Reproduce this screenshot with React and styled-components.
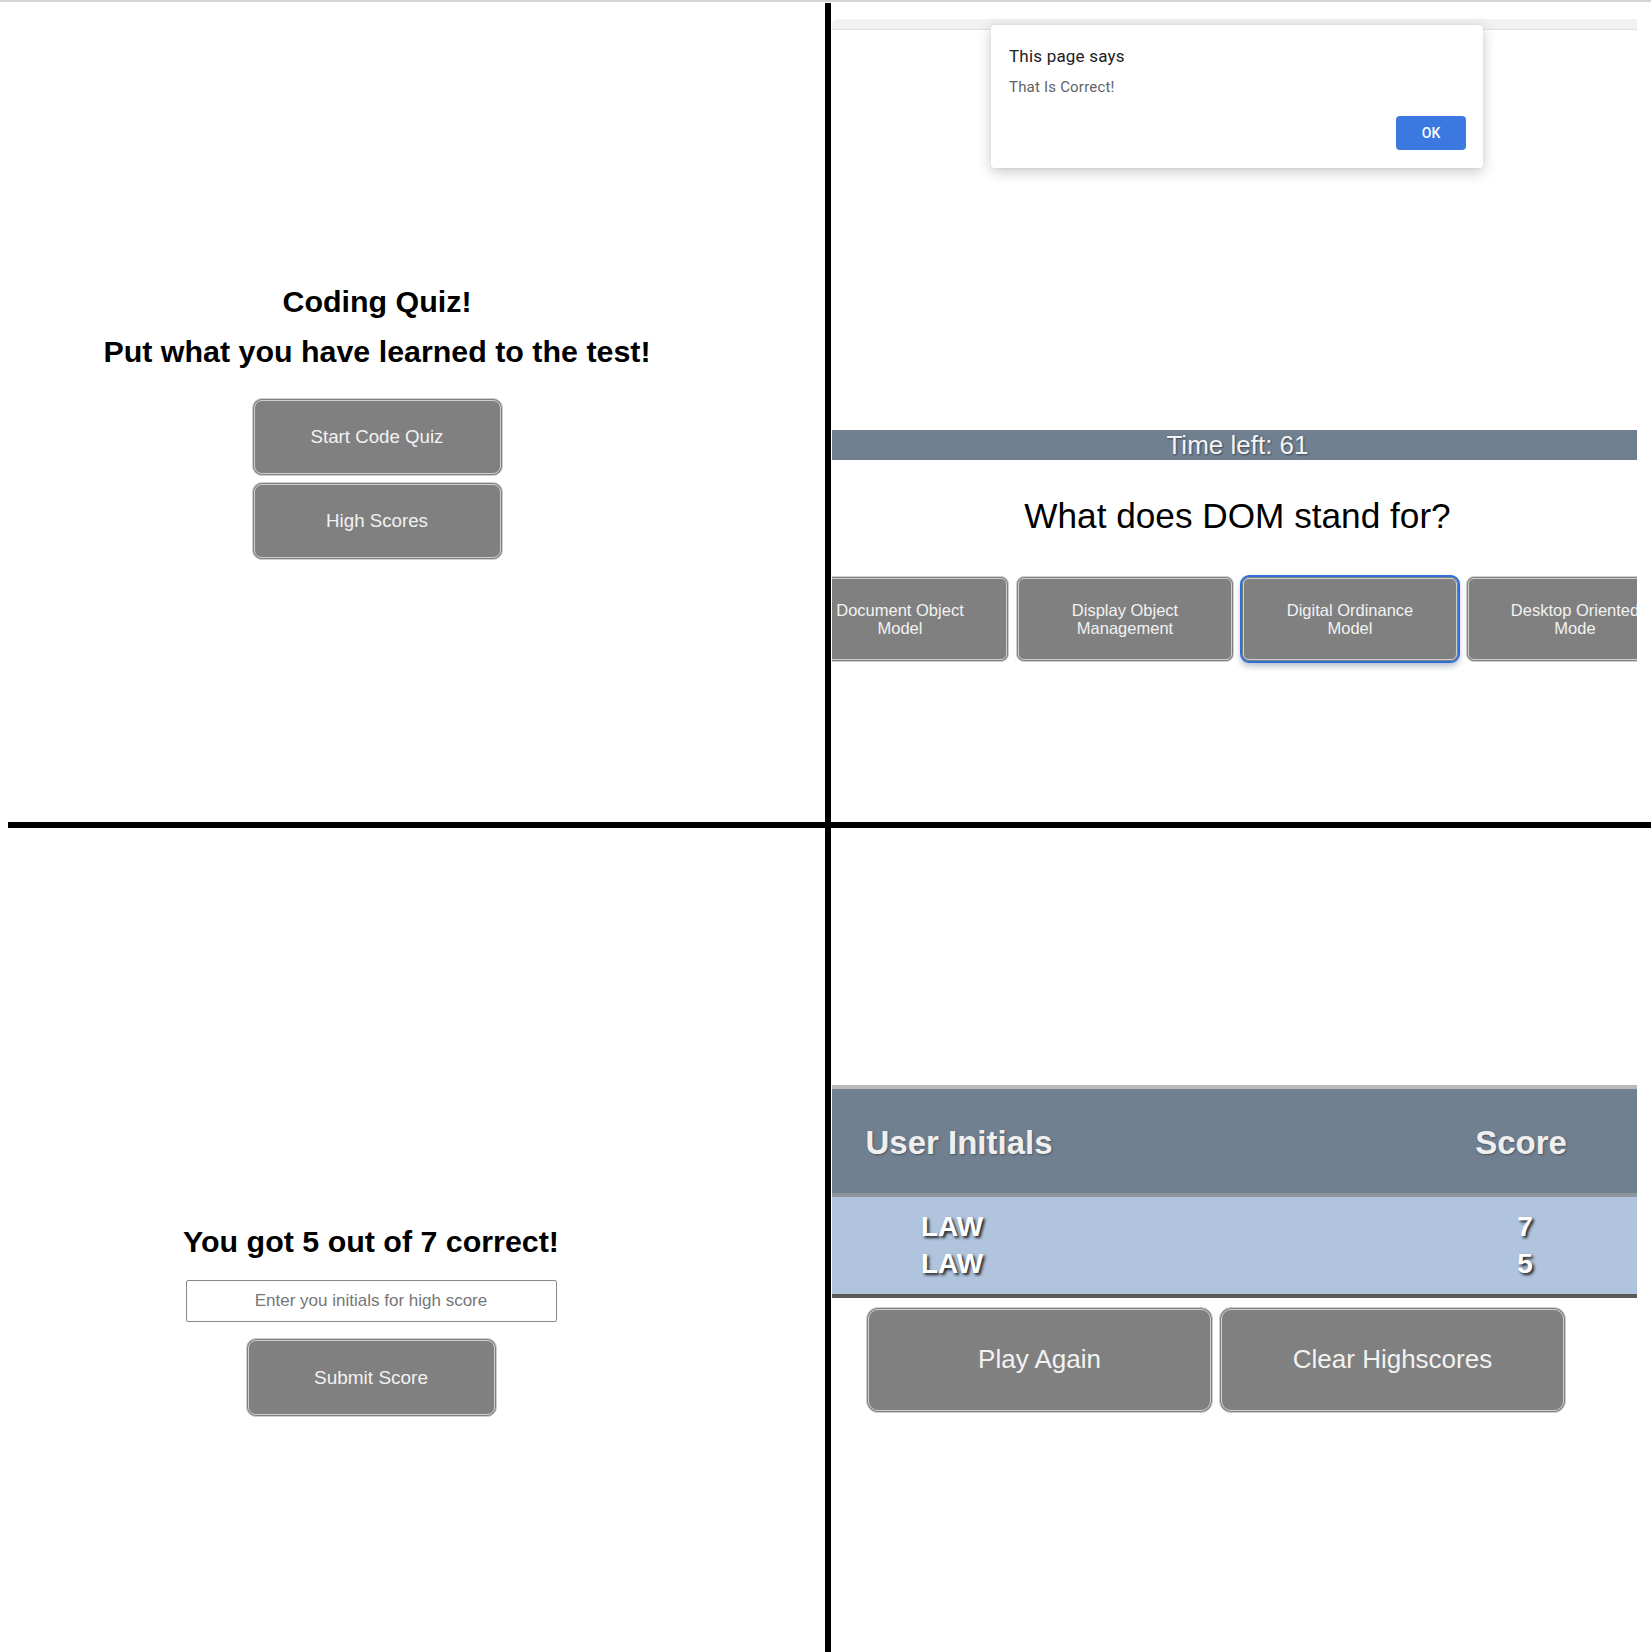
import React from 'react'
import styled, { createGlobalStyle } from 'styled-components'

const GlobalStyle = createGlobalStyle`
  html, body {
    margin: 0;
    padding: 0;
    background: #fff;
  }
  body {
    font-family: "Liberation Sans", Arial, sans-serif;
  }
  * {
    box-sizing: border-box;
  }
`

const Collage = styled.div`
  width: 1651px;
  height: 1652px;
  border-top: 2px solid #d4d4d4;
  padding-top: 1px;
  display: grid;
  grid-template-columns: 825px 6px 820px;
  grid-template-rows: 819px 6px 824px;
  overflow: hidden;
`

const VDivider = styled.div`
  grid-column: 2;
  grid-row: 1 / 4;
  background: #000;
`

const HDivider = styled.div`
  grid-column: 1 / 4;
  grid-row: 2;
  margin-left: 8px;
  background: #000;
`

const Panel = styled.section`
  grid-column: ${p => p.$col};
  grid-row: ${p => p.$row};
  position: relative;
  background: #fff;
  overflow: hidden;
`

/* left hand screens: centred column */
const CenterColumn = styled.div`
  width: ${p => p.$width}px;
  padding-top: ${p => p.$top}px;
  display: flex;
  flex-direction: column;
  align-items: center;
`

const Heading = styled.h1`
  margin: 0 0 ${p => p.$gap || 0}px;
  font-size: 30.4px;
  line-height: 34px;
  font-weight: 700;
  color: #000;
  text-align: center;
  white-space: nowrap;
`

const GrayButton = styled.button`
  flex-shrink: 0;
  width: ${p => p.$w}px;
  height: ${p => p.$h}px;
  margin-top: ${p => p.$mt || 0}px;
  padding: 0 4px;
  background: #808080;
  border: 3px double #cfcfcf;
  border-radius: ${p => p.$radius || 10}px;
  color: #f2f2f2;
  font-family: "Liberation Sans", Arial, sans-serif;
  font-size: ${p => p.$font}px;
  line-height: 1.12;
  text-align: center;
  cursor: pointer;
  white-space: nowrap;

  ${p => p.$focused && `
    outline: 2px solid #2f6fd8;
    outline-offset: -1px;
    box-shadow: 0 4px 6px rgba(40, 60, 100, 0.35);
  `}
`

const InitialsInput = styled.input`
  width: 371px;
  height: 42px;
  margin-top: 22px;
  border: 1px solid #8a8a8a;
  border-radius: 2px;
  font-family: "Liberation Sans", Arial, sans-serif;
  font-size: 17px;
  text-align: center;
  color: #222;
  background: #fff;

  &::placeholder {
    color: #767676;
  }
`

/* right hand screens: the cropped browser viewport */
const Viewport = styled.div`
  margin-left: 1px;
  width: 805px;
  height: 100%;
  overflow: hidden;
`

const Screen = styled.div`
  width: ${p => p.$width}px;
  height: 100%;
  display: flex;
  flex-direction: column;
`

const ChromeBand = styled.div`
  margin-top: 16px;
  width: 805px;
  height: 11px;
  background: #f1f1f1;
  border-bottom: 1px solid #e2e2e2;
  border-radius: 6px 0 0 0;
`

const TimerBar = styled.div`
  margin-top: ${p => p.$mt}px;
  height: 30px;
  background: #708090;
  color: #f4f4f4;
  font-size: 26px;
  line-height: 30px;
  text-align: center;
  text-shadow: 1px 1px 2px #3c4550;
`

const Question = styled.h2`
  margin: 36px 0 0;
  font-size: 35.2px;
  line-height: 40px;
  font-weight: 400;
  color: #000;
  text-align: center;
`

const AnswerRow = styled.div`
  margin-top: 40px;
  display: flex;
  justify-content: center;
  gap: 7px;
`

/* alert dialog over the quiz screen */
const Dialog = styled.div`
  position: absolute;
  left: 160px;
  top: 22px;
  width: 492px;
  height: 143px;
  background: #fff;
  border-radius: 3px;
  box-shadow: 0 4px 14px rgba(0, 0, 0, 0.22), 0 0 1px rgba(0, 0, 0, 0.2);
  padding: 20px 17px 0 18px;
  font-family: Roboto, "Liberation Sans", sans-serif;
  display: flex;
  flex-direction: column;
`

const DialogTitle = styled.div`
  font-size: 17px;
  line-height: 22px;
  letter-spacing: 0.2px;
  color: #202124;
`

const DialogMessage = styled.div`
  margin-top: 10px;
  font-size: 15px;
  line-height: 20px;
  letter-spacing: 0.2px;
  color: #5f6368;
`

const DialogActions = styled.div`
  margin-top: auto;
  margin-bottom: 18px;
  display: flex;
  justify-content: flex-end;
`

const OkButton = styled.button`
  width: 70px;
  height: 34px;
  border: none;
  border-radius: 4px;
  background: #3b78e0;
  color: #fff;
  font-family: Roboto, "Liberation Sans", sans-serif;
  font-size: 14px;
  font-weight: 500;
`

/* high score table */
const ScoreTable = styled.div`
  margin-top: 257px;
  border-top: 4px solid #b9b9b9;
  border-bottom: 4px solid #5a5a5a;
`

const ScoreHead = styled.div`
  height: 108px;
  background: #708090;
  border-bottom: 4px solid #8e959c;
  display: flex;
  align-items: center;
  justify-content: space-between;
  padding: 4px 16px 0 27px;
  color: #efefef;
  font-size: 33px;
  font-weight: 700;
  text-shadow: 1px 1px 2px #4a5560;
`

const ScoreBody = styled.div`
  height: 97px;
  background: #b0c4de;
  padding: 11px 12px 0 20px;
`

const ScoreRow = styled.div`
  height: 37px;
  display: flex;
  align-items: center;
  justify-content: space-between;
  color: #fff;
  font-size: 28px;
  font-weight: 700;
  text-shadow: 2px 2px 3px #1e1e1e;
`

const Cell = styled.span`
  width: 200px;
  text-align: center;
`

const ScoreActions = styled.div`
  margin: 9px 0 0 34px;
  display: flex;
  gap: 6px;
`

const answers = [
  ['Document Object', 'Model'],
  ['Display Object', 'Management'],
  ['Digital Ordinance', 'Model'],
  ['Desktop Oriented', 'Mode']
]

const scores = [
  { initials: 'LAW', score: 7 },
  { initials: 'LAW', score: 5 }
]

export default function App() {
  return (
    <>
      <GlobalStyle />
      <Collage>
        {/* start screen */}
        <Panel $col={1} $row={1}>
          <CenterColumn $width={754} $top={281}>
            <Heading $gap={16}>Coding Quiz!</Heading>
            <Heading>Put what you have learned to the test!</Heading>
            <GrayButton $w={251} $h={78} $mt={30} $font={18.7}>Start Code Quiz</GrayButton>
            <GrayButton $w={251} $h={78} $mt={6} $font={18.7}>High Scores</GrayButton>
          </CenterColumn>
        </Panel>

        <VDivider />

        {/* question screen with alert */}
        <Panel $col={3} $row={1}>
          <Viewport>
            <Screen $width={811}>
              <ChromeBand />
              <TimerBar $mt={400}>Time left: 61</TimerBar>
              <Question>What does DOM stand for?</Question>
              <AnswerRow>
                {answers.map((lines, i) => (
                  <GrayButton key={i} $w={218} $h={86} $font={16.5} $radius={8} $focused={i === 2}>
                    {lines[0]}
                    <br />
                    {lines[1]}
                  </GrayButton>
                ))}
              </AnswerRow>
            </Screen>
          </Viewport>
          <Dialog>
            <DialogTitle>This page says</DialogTitle>
            <DialogMessage>That Is Correct!</DialogMessage>
            <DialogActions>
              <OkButton>OK</OkButton>
            </DialogActions>
          </Dialog>
        </Panel>

        <HDivider />

        {/* end screen */}
        <Panel $col={1} $row={3}>
          <CenterColumn $width={742} $top={396}>
            <Heading>You got 5 out of 7 correct!</Heading>
            <InitialsInput placeholder="Enter you initials for high score" />
            <GrayButton $w={251} $h={79} $mt={16} $font={19}>Submit Score</GrayButton>
          </CenterColumn>
        </Panel>

        {/* high scores */}
        <Panel $col={3} $row={3}>
          <Viewport>
            <Screen $width={805}>
              <ScoreTable>
                <ScoreHead>
                  <Cell>User Initials</Cell>
                  <Cell>Score</Cell>
                </ScoreHead>
                <ScoreBody>
                  {scores.map((s, i) => (
                    <ScoreRow key={i}>
                      <Cell>{s.initials}</Cell>
                      <Cell>{s.score}</Cell>
                    </ScoreRow>
                  ))}
                </ScoreBody>
              </ScoreTable>
              <ScoreActions>
                <GrayButton $w={347} $h={106} $font={26} $radius={12}>Play Again</GrayButton>
                <GrayButton $w={347} $h={106} $font={26} $radius={12}>Clear Highscores</GrayButton>
              </ScoreActions>
            </Screen>
          </Viewport>
        </Panel>
      </Collage>
    </>
  )
}
